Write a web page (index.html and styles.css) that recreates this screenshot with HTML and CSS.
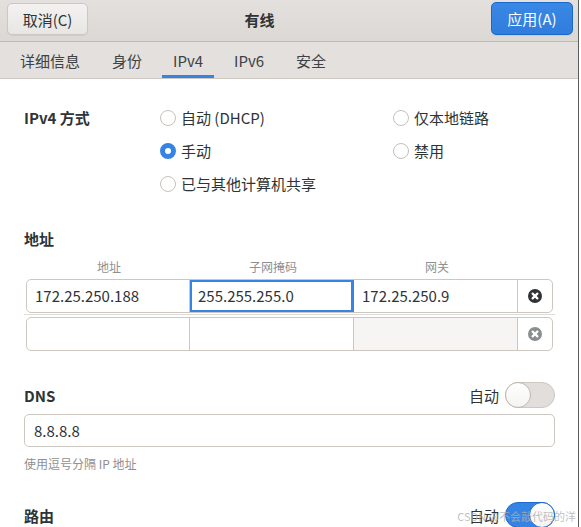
FILE: index.html
```html
<!doctype html>
<html>
<head>
<meta charset="utf-8">
<title>有线</title>
<link rel="stylesheet" href="styles.css">
</head>
<body>
<div class="window">

	<!-- header bar -->
	<div class="headerbar">
		<button class="btn">取消(C)</button>
		<div class="title">有线</div>
		<button class="btn btn-blue">应用(A)</button>
	</div>

	<!-- tabs -->
	<nav class="tabs">
		<a class="tab">详细信息</a>
		<a class="tab">身份</a>
		<a class="tab current">IPv4</a>
		<a class="tab">IPv6</a>
		<a class="tab">安全</a>
	</nav>

	<div class="content">

		<!-- IPv4 method -->
		<div class="method">
			<div class="label bold">IPv4 方式</div>
			<div class="radio"><span class="dot"></span>自动 (DHCP)</div>
			<div class="radio"><span class="dot"></span>仅本地链路</div>
			<div></div>
			<div class="radio"><span class="dot on"></span>手动</div>
			<div class="radio"><span class="dot"></span>禁用</div>
			<div></div>
			<div class="radio"><span class="dot"></span>已与其他计算机共享</div>
		</div>

		<!-- addresses -->
		<div class="heading bold">地址</div>
		<div class="colheads">
			<span>地址</span>
			<span>子网掩码</span>
			<span>网关</span>
		</div>
		<div class="addr-list">
			<div class="addr-row">
				<div class="linked">
					<div class="cell">172.25.250.188</div>
					<div class="cell focus">255.255.255.0</div>
					<div class="cell">172.25.250.9</div>
					<div class="del">
						<svg width="14" height="14" viewBox="0 0 14 14"><circle cx="7" cy="7" r="7" fill="#2e3436"/><path d="M4.6 4.6 L9.4 9.4 M9.4 4.6 L4.6 9.4" stroke="#fff" stroke-width="2.2" stroke-linecap="round"/></svg>
					</div>
				</div>
			</div>
			<div class="addr-row last">
				<div class="linked">
					<div class="cell"></div>
					<div class="cell"></div>
					<div class="cell off"></div>
					<div class="del">
						<svg width="14" height="14" viewBox="0 0 14 14"><circle cx="7" cy="7" r="7" fill="#8b8e8f"/><path d="M4.6 4.6 L9.4 9.4 M9.4 4.6 L4.6 9.4" stroke="#fff" stroke-width="2.2" stroke-linecap="round"/></svg>
					</div>
				</div>
			</div>
		</div>

		<!-- DNS -->
		<div class="section-row dns-row">
			<div class="bold">DNS</div>
			<div class="auto">自动 <span class="switch"><span class="knob"></span></span></div>
		</div>
		<div class="entry">8.8.8.8</div>
		<div class="hint">使用逗号分隔 IP 地址</div>

		<!-- routes -->
		<div class="section-row route-row">
			<div class="bold">路由</div>
			<div class="auto">自动 <span class="switch on"><span class="knob"></span></span></div>
		</div>
	</div>

	<div class="watermark">CSDN @不会敲代码的洋</div>
</div>
</body>
</html>
```

FILE: styles.css
```css
/*Page*/
body{
	margin: 0;
	background: #fff;
	font-family: "Noto Sans CJK SC", "Noto Sans", sans-serif;
	font-size: 15px;
	color: #2e3436;
}
.window{
	width: 578px;
	height: 527px;
	border-right: 1px solid #5c5c5c;
	position: relative;
	overflow: hidden;
	background: #fff;
}
.bold{
	font-weight: bold;
}

/*Header bar*/
.headerbar{
	height: 42px;
	display: flex;
	align-items: flex-start;
	padding: 2px 5px 0 7px;
	box-sizing: border-box;
	background: linear-gradient(#e3e0dd, #dcd8d4);
	border-bottom: 1px solid #c0bab4;
}
.btn{
	font-family: inherit;
	font-size: 15px;
	color: #2e3436;
	width: 81px;
	height: 32px;
	margin-top: 1px;
	border: 1px solid #cdc7c2;
	border-radius: 5px;
	background: linear-gradient(#f3f2f1, #e8e6e3);
	box-shadow: 0 1px 1px rgba(0,0,0,0.06);
	padding: 0;
}
.btn-blue{
	width: 82px;
	height: 33px;
	margin-top: 0;
	color: #fff;
	border-color: #1b6acb;
	background: linear-gradient(#3a88e6, #2f7cdc);
}
.title{
	flex: 1;
	text-align: center;
	padding-right: 60px;
	font-weight: bold;
	line-height: 36px;
}

/*Tabs*/
.tabs{
	height: 36px;
	display: flex;
	gap: 8px;
	padding-left: 8px;
	background: #e3e0dd;
	border-bottom: 1px solid #cdc7c2;
}
.tab{
	padding: 0 12px;
	color: #3d4244;
	box-sizing: border-box;
	border-bottom: 3px solid transparent;
	line-height: 37px;
	height: 36px;
}
.tab.current{
	border-bottom-color: #3584e4;
	padding: 0 11px;
}

/*Content*/
.content{
	padding: 22px 23px 0 24px;
}
.method{
	display: grid;
	grid-template-columns: 136px 233px 1fr;
	grid-auto-rows: 33px;
	align-items: center;
}
.radio{
	display: flex;
	align-items: center;
	gap: 5px;
}
.dot{
	width: 14px;
	height: 14px;
	border: 1px solid #c6c0bb;
	border-radius: 50%;
	background: #fff;
	box-sizing: content-box;
}
.dot.on{
	width: 6px;
	height: 6px;
	border: 5px solid #3584e4;
}

.heading{
	margin-top: 28px;
	line-height: 22px;
}
.colheads{
	display: grid;
	grid-template-columns: 164px 164px 164px;
	margin: 9px 0 0 3px;
	font-size: 12px;
	line-height: 16px;
	color: #8e9091;
	text-align: center;
}
.addr-list{
	margin-top: 2px;
}
.addr-row{
	padding: 2px 2px 1px 2px;
	border-bottom: 1px solid #dfdbd7;
}
.addr-row.last{
	border-bottom: none;
	padding-top: 2px;
}
.linked{
	display: flex;
	height: 34px;
	border: 1px solid #cdc7c2;
	border-radius: 5px;
	overflow: hidden;
	box-sizing: border-box;
}
.cell{
	width: 164px;
	border-right: 1px solid #cdc7c2;
	padding-left: 8px;
	line-height: 32px;
	box-sizing: border-box;
}
.cell:first-child{
	width: 163px;
}
.cell.focus{
	box-shadow: inset 0 0 0 2px #3584e4;
	border-right-color: #3584e4;
}
.cell.off{
	background: #f6f5f4;
}
.del{
	flex: 1;
	display: flex;
	align-items: center;
	justify-content: center;
}
.del svg{
	display: block;
}

/*Switch rows*/
.section-row{
	display: flex;
	justify-content: space-between;
	align-items: center;
	height: 26px;
}
.dns-row{
	margin-top: 30px;
}
.route-row{
	margin-top: 29px;
}
.auto{
	display: flex;
	align-items: center;
	gap: 6px;
}
.switch{
	width: 50px;
	height: 26px;
	box-sizing: border-box;
	border: 1px solid #cdc7c2;
	border-radius: 13px;
	background: #e1dedb;
	position: relative;
	display: inline-block;
}
.knob{
	position: absolute;
	top: -1px;
	left: -1px;
	width: 26px;
	height: 26px;
	box-sizing: border-box;
	border-radius: 50%;
	background: linear-gradient(#fff, #f4f3f2);
	border: 1px solid #bfb8b1;
}
.switch.on{
	background: #3584e4;
	border-color: #1b6acb;
}
.switch.on .knob{
	left: auto;
	right: -1px;
	border-color: #1b6acb;
}

.entry{
	margin-top: 6px;
	height: 33px;
	box-sizing: border-box;
	border: 1px solid #cdc7c2;
	border-radius: 5px;
	padding-left: 9px;
	line-height: 31px;
}
.hint{
	margin-top: 8px;
	font-size: 12px;
	color: #8e9091;
	line-height: 18px;
}

/*Watermark over the corner*/
.watermark{
	position: absolute;
	right: 2px;
	bottom: 3px;
	font-size: 11px;
	color: rgba(175,175,175,0.8);
}
```
